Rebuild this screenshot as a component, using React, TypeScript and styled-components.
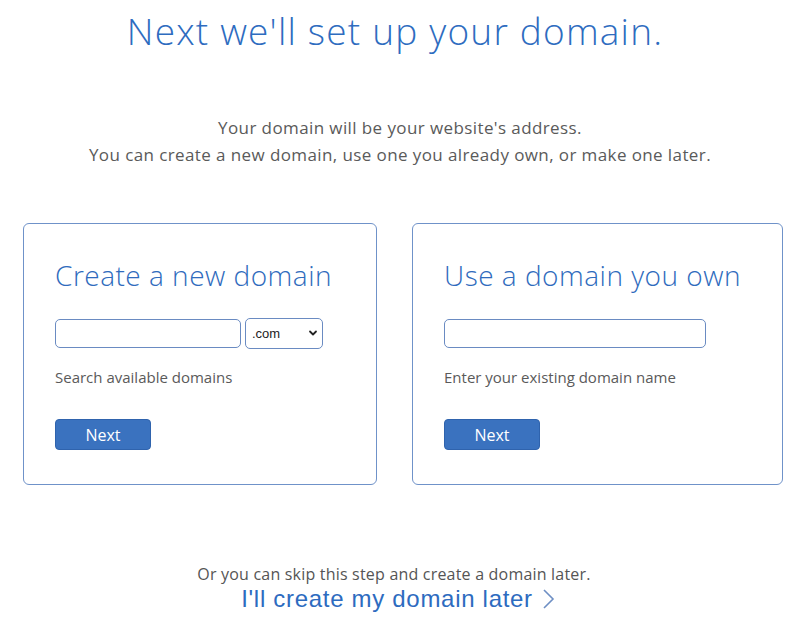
import styled, { createGlobalStyle } from "styled-components";

const GlobalStyle = createGlobalStyle`
  body {
    margin: 0;
    background: #ffffff;
    font-family: "Open Sans", "Liberation Sans", sans-serif;
  }
`;

type CardProps = {
  title: string;
  hint: string;
  width: number;
  withTld?: boolean;
  inputWidth: number;
};

function DomainCard({ title, hint, width, withTld, inputWidth }: CardProps) {
  return (
    <StyledCard $width={width}>
      <StyledCardTitle>{title}</StyledCardTitle>
      <StyledFieldRow>
        <StyledInput type="text" $width={inputWidth} />
        {withTld && (
          <StyledSelectWrap>
            <StyledSelect defaultValue=".com">
              <option>.com</option>
              <option>.net</option>
              <option>.org</option>
            </StyledSelect>
            <StyledChevron viewBox="0 0 10 10">
              <path d="M2 3.5 L5 6.5 L8 3.5" />
            </StyledChevron>
          </StyledSelectWrap>
        )}
      </StyledFieldRow>
      <StyledHint>{hint}</StyledHint>
      <StyledButton type="button">Next</StyledButton>
    </StyledCard>
  );
}

export default function App() {
  return (
    <StyledPage>
      <GlobalStyle />
      <StyledTitle>Next we'll set up your domain.</StyledTitle>
      <StyledIntro>
        Your domain will be your website's address.
        <br />
        You can create a new domain, use one you already own, or make one later.
      </StyledIntro>
      <StyledCards>
        <DomainCard
          title="Create a new domain"
          hint="Search available domains"
          width={354}
          inputWidth={186}
          withTld
        />
        <DomainCard
          title="Use a domain you own"
          hint="Enter your existing domain name"
          width={371}
          inputWidth={262}
        />
      </StyledCards>
      <StyledSkip>Or you can skip this step and create a domain later.</StyledSkip>
      <StyledLaterLink href="#">
        I'll create my domain later
        <svg width="14" height="22" viewBox="0 0 14 22">
          <path d="M2 2 L11 11 L2 20" />
        </svg>
      </StyledLaterLink>
    </StyledPage>
  );
}

const StyledPage = styled.main`
  width: 800px;
  min-height: 643px;
  display: flex;
  flex-direction: column;
  align-items: center;
`;

const StyledTitle = styled.h1`
  margin: 9px 10px 0 0;
  font-size: 37px;
  line-height: 44px;
  font-weight: 300;
  color: #2e6cbf;
  letter-spacing: 1.2px;
`;

const StyledIntro = styled.p`
  margin: 61px 0 0;
  font-size: 17px;
  line-height: 27px;
  font-weight: 400;
  letter-spacing: 0.4px;
  color: #5a5a5a;
  text-align: center;
`;

const StyledCards = styled.div`
  align-self: stretch;
  display: flex;
  gap: 35px;
  padding: 0 17px 0 23px;
  margin-top: 55px;
`;

const StyledCard = styled.section<{ $width: number }>`
  box-sizing: border-box;
  width: ${(p) => p.$width}px;
  height: 262px;
  border: 1.5px solid #6f92c9;
  border-radius: 6px;
  padding: 34px 30px 0 31px;
  display: flex;
  flex-direction: column;
  align-items: flex-start;
`;

const StyledCardTitle = styled.h2`
  margin: 0;
  font-size: 28px;
  line-height: 34px;
  font-weight: 300;
  letter-spacing: 0.5px;
  color: #2f6bbd;
  white-space: nowrap;
`;

const StyledFieldRow = styled.div`
  display: flex;
  align-items: center;
  gap: 4px;
  height: 29px;
  margin-top: 27px;
`;

const StyledInput = styled.input<{ $width: number }>`
  box-sizing: border-box;
  width: ${(p) => p.$width}px;
  height: 29px;
  border: 1px solid #6a8bc2;
  border-radius: 5px;
  background: #ffffff;
  outline: none;
`;

const StyledSelectWrap = styled.div`
  position: relative;
  flex: none;
  width: 78px;
  height: 31px;
`;

const StyledSelect = styled.select`
  box-sizing: border-box;
  width: 100%;
  height: 100%;
  appearance: none;
  border: 1px solid #6a8bc2;
  border-radius: 5px;
  background: #ffffff;
  padding: 0 0 0 6px;
  font-family: "Liberation Sans", Arial, sans-serif;
  font-size: 13px;
  color: #222222;
  outline: none;
`;

const StyledChevron = styled.svg`
  position: absolute;
  right: 5px;
  top: 10px;
  width: 10px;
  height: 10px;
  pointer-events: none;

  path {
    fill: none;
    stroke: #222222;
    stroke-width: 1.8;
    stroke-linecap: round;
    stroke-linejoin: round;
  }
`;

const StyledHint = styled.p`
  margin: 19px 0 0;
  font-size: 15px;
  line-height: 20px;
  color: #5a5a5a;
`;

const StyledButton = styled.button`
  margin-top: 32px;
  width: 96px;
  height: 31px;
  border: 1px solid #2f63ad;
  border-radius: 4px;
  background: #3a72bf;
  color: #ffffff;
  font-family: "Open Sans", sans-serif;
  font-size: 16px;
  cursor: pointer;
`;

const StyledSkip = styled.p`
  margin: 78px 12px 0 0;
  font-size: 16px;
  line-height: 22px;
  letter-spacing: 0.2px;
  color: #555555;
`;

const StyledLaterLink = styled.a`
  display: flex;
  align-items: center;
  gap: 9px;
  margin-right: 3px;
  font-family: "Liberation Sans", Arial, sans-serif;
  font-size: 24px;
  line-height: 28px;
  letter-spacing: 0.7px;
  color: #2d6bbf;
  text-decoration: none;

  svg path {
    fill: none;
    stroke: #6e8fc4;
    stroke-width: 1.6;
  }
`;
